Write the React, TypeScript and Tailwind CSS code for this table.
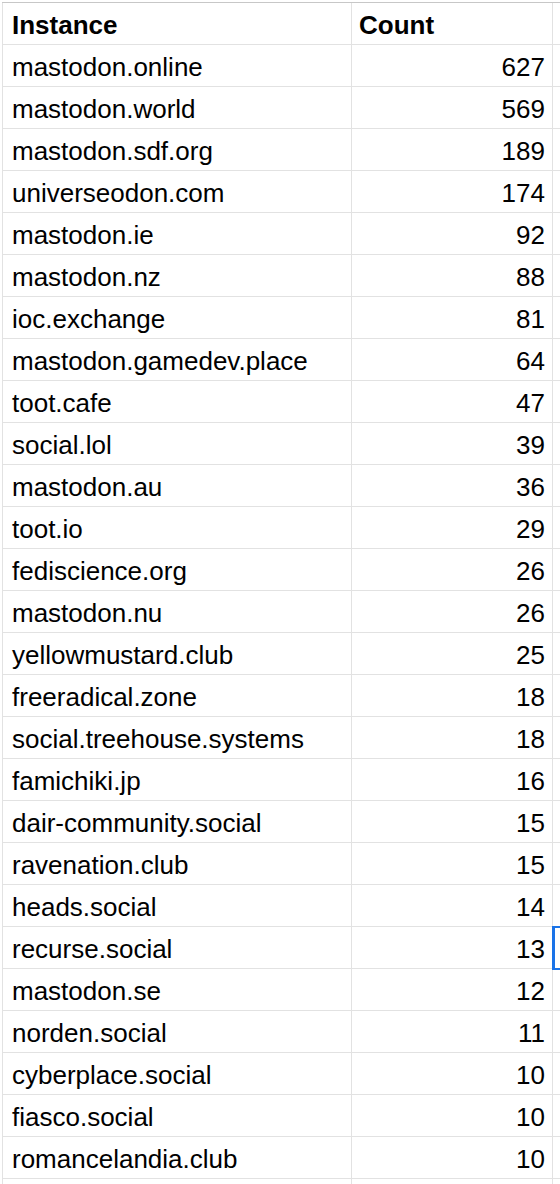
import React from "react";

const rows: [string, number][] = [
  ["mastodon.online", 627],
  ["mastodon.world", 569],
  ["mastodon.sdf.org", 189],
  ["universeodon.com", 174],
  ["mastodon.ie", 92],
  ["mastodon.nz", 88],
  ["ioc.exchange", 81],
  ["mastodon.gamedev.place", 64],
  ["toot.cafe", 47],
  ["social.lol", 39],
  ["mastodon.au", 36],
  ["toot.io", 29],
  ["fediscience.org", 26],
  ["mastodon.nu", 26],
  ["yellowmustard.club", 25],
  ["freeradical.zone", 18],
  ["social.treehouse.systems", 18],
  ["famichiki.jp", 16],
  ["dair-community.social", 15],
  ["ravenation.club", 15],
  ["heads.social", 14],
  ["recurse.social", 13],
  ["mastodon.se", 12],
  ["norden.social", 11],
  ["cyberplace.social", 10],
  ["fiasco.social", 10],
  ["romancelandia.club", 10],
];

function Row({
  a,
  b,
  header,
}: {
  a: string;
  b: string;
  header?: boolean;
}) {
  return (
    <div className="flex h-[42px] border-b border-[#e2e2e2]">
      <div
        className={`flex w-[350px] shrink-0 items-end border-l border-r border-[#e2e2e2] pb-[4px] pl-[9px] leading-[29px] whitespace-nowrap ${
          header ? "font-bold" : ""
        }`}
      >
        {a}
      </div>
      <div
        className={`flex w-[201px] shrink-0 items-end border-r border-[#e2e2e2] pb-[4px] pr-[7px] leading-[29px] ${
          header ? "justify-start pl-[7px] font-bold" : "justify-end"
        }`}
      >
        {b}
      </div>
      <div className="flex-1" />
    </div>
  );
}

export default function App() {
  return (
    <div
      className="relative h-[1184px] w-[560px] overflow-hidden bg-white pl-[2px] pt-[2px] text-[26px] text-black"
      style={{ fontFamily: '"Liberation Sans", Arial, sans-serif' }}
    >
      <div className="border-t border-[#c7c7c7]">
        <Row a="Instance" b="Count" header />
        {rows.map(([n, c]) => (
          <Row key={n} a={n} b={String(c)} />
        ))}
        <div className="flex h-[42px]">
          <div className="w-[350px] shrink-0 border-l border-r border-[#e2e2e2]" />
          <div className="w-[201px] shrink-0 border-r border-[#e2e2e2]" />
        </div>
      </div>
      <div className="pointer-events-none absolute left-[552px] top-[926px] h-[44px] w-[30px] border-y-2 border-l-[3px] border-[#1a73e8]" />
    </div>
  );
}
